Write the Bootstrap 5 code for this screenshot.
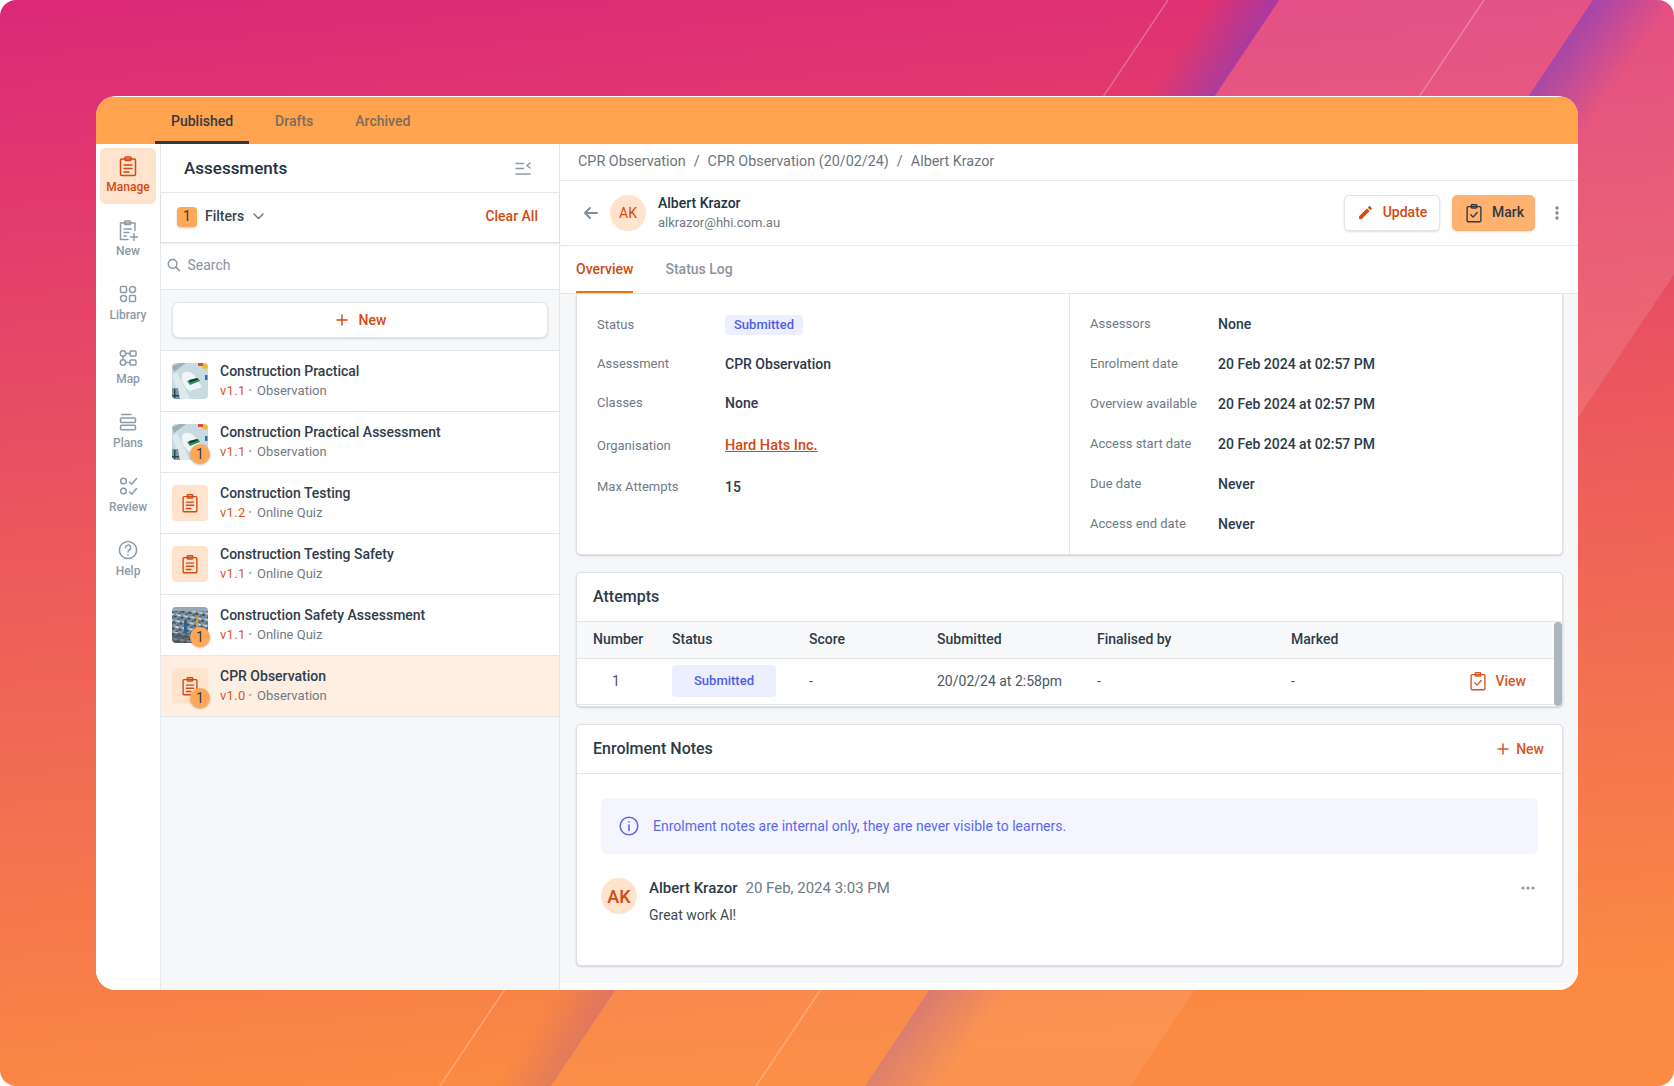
<!doctype html>
<html lang="en">
<head>
<meta charset="utf-8">
<title>Assessments</title>
<link href="https://cdn.jsdelivr.net/npm/bootstrap@5.3.0/dist/css/bootstrap.min.css" rel="stylesheet">
<style>
html,body{margin:0;background:#fff}
body{font-family:Roboto,"Liberation Sans",sans-serif;font-size:14px;color:#2b3a4a;width:1674px;height:1086px;overflow:hidden}
.stage{position:relative;width:1674px;height:1086px;padding:96px;border-radius:16px;overflow:hidden;background:linear-gradient(175deg,#dc2878 0%,#ec5a5c 46%,#fb8b42 92%)}
.stage-art{position:absolute;left:0;top:0;width:1674px;height:1086px}
.shell{position:relative;height:894px;background:#fff;border-radius:20px;overflow:hidden;padding-top:1px;display:flex;flex-direction:column}
.tabbar{height:47px;background:#ffa34f;padding-left:59px;gap:10px;flex-wrap:nowrap;flex:none}
.tabbar .nav-link{height:47px;padding:0 16px;line-height:48px;font-weight:500;color:#7d6c58;border-bottom:3px solid transparent;font-size:14px}
.tabbar .nav-link.active{color:#333a42;border-bottom-color:#33383e}
.body-row{flex:1;min-height:0}
.rail{width:65px;flex:none;border-right:1px solid #e6e9ed;padding:4px 4px 0;background:#fff}
.rail-link{display:flex;flex-direction:column;align-items:center;width:56px;height:56px;margin-bottom:8px;padding-top:6px;border-radius:5px;color:#8d9aa7;font-size:12px;font-weight:500;line-height:14px;text-decoration:none}
.rail-link span{margin-top:2px}
.rail-link.on{background:#ffe3cc;color:#d14a10}
.ico{fill:none;stroke:currentColor;stroke-width:1.5;stroke-linecap:round;stroke-linejoin:round;flex:none}
.listpane{width:399px;flex:none;background:#f6f7f9;border-right:1px solid #e3e6ea}
.pane-head{height:49px;background:#fff;border-bottom:1px solid #e8eaed;padding:2px 28px 0 23px;font-size:17px;font-weight:500;color:#243342}
.pane-filters{height:50px;background:#fff;border-bottom:1px solid #dfe2e6;box-shadow:0 1px 2px rgba(60,70,80,.12);padding:0 21px 2px 16px;position:relative}
.count-chip{width:20px;height:20px;border-radius:4px;background:#ffa85a;color:#33383e;font-size:14px;box-shadow:0 1px 2px rgba(80,60,30,.25);margin-right:8px}
.filters-txt{font-weight:500;color:#38444f;margin-right:9px}
.accent{color:#d14a10;font-weight:500;text-decoration:none}
.pane-search{height:47px;background:#fff;border-bottom:1px solid #e3e6ea;padding:0 0 2px 6px;color:#8a949e}
.pane-search .form-control{border:0;box-shadow:none;padding:0 0 0 7px;font-size:14px;background:transparent}
.pane-search .form-control::placeholder{color:#8a949e}
.new-wrap{padding:12px 11px}
.new-btn{width:100%;height:36px;background:#fff;border:1px solid #e2e5e9;border-radius:7px;box-shadow:0 1px 2px rgba(60,70,80,.18);color:#d14a10;font-weight:500;font-size:14px;padding:0 0 0 2px;gap:11px}
.new-btn:hover{background:#fff;color:#d14a10}
.item-stack{border-radius:0;background:transparent}
.item-stack .list-group-item{height:61px;padding:12px 11px;border:0;border-top:1px solid #e3e6ea;border-radius:0;gap:12px;color:#2b3a4a;margin:0}
.item-stack .list-group-item:last-child{height:62px;border-bottom:1px solid #e3e6ea}
.item-stack .list-group-item.picked{background:#ffefe2}
.thumb-box{position:relative;width:36px;height:36px;flex:none}
.thumb-box>svg.pic{width:36px;height:36px;border-radius:4px;display:block}
.tile{width:36px;height:36px;border-radius:4px;background:#ffe3cc;color:#d14a10}
.dot-badge{position:absolute;left:18px;top:20px;width:20px;height:20px;border-radius:50%;background:#ffa85a;color:#33383e;font-size:14px;line-height:20px;text-align:center;box-shadow:0 1px 2px rgba(80,60,30,.35)}
.item-title{font-size:14px;font-weight:500;line-height:19px;color:#2f3d4b;margin-top:-1px;white-space:nowrap}
.item-sub{font-size:13px;line-height:19px;color:#6f7a85;display:flex;white-space:nowrap}
.item-sub b{font-weight:400;color:#d9561f;letter-spacing:.3px;width:23px}
.item-sub i{font-style:normal;width:14px;text-align:center;color:#aab2ba;font-size:11px;line-height:19px}
.mainpane{flex:1;min-width:0;background:#fff;padding-bottom:7px}
.crumbs{height:37px;border-bottom:1px solid #e8eaed;padding:0 18px;flex:none}
.crumbs .breadcrumb{--bs-breadcrumb-margin-bottom:0;--bs-breadcrumb-divider-color:#6b7680;--bs-breadcrumb-item-active-color:#6b7680;margin:0;font-size:14.35px;color:#6b7680}
.crumbs a{color:#6b7680;text-decoration:none}
.person{height:65px;border-bottom:1px solid #e8eaed;padding:0 19px 0 24px;flex:none}
.back-ico{margin-right:12px}
.round-ini{width:36px;height:36px;border-radius:50%;background:#ffe3cc;color:#d14a10;font-size:14px;flex:none}
.ini-gap{margin-right:12px}
.p-name{font-size:14px;font-weight:500;line-height:20px;color:#243342}
.p-mail{font-size:13px;line-height:20px;color:#6f7a85}
.act{height:36px;font-size:14px;font-weight:500;padding:0 0 1px;gap:9px;border-radius:5px}
.act-up{width:96px;background:#fff;border:1px solid #e2e5e9;color:#d14a10;box-shadow:0 1px 2px rgba(60,70,80,.18)}
.act-up:hover{background:#fff;color:#d14a10}
.act-mk{width:83px;margin-left:12px;background:#ffb26f;border:1px solid #ffb26f;color:#33383e;box-shadow:0 1px 2px rgba(60,70,80,.18);gap:7px}
.act-mk:hover{background:#ffb26f;color:#33383e}
.kebab{margin-left:20px}
.subtabs{height:48px;border-bottom:1px solid #e3e6ea;padding-left:16px;gap:32px;flex:none}
.subtabs .nav-link{padding:0;height:47px;line-height:46px;font-size:14px;font-weight:500;color:#8a949e;border-bottom:2px solid transparent}
.subtabs .nav-link.active{color:#d14a10;border-bottom-color:#f57006}
.scroller{flex:1;min-height:0;overflow:hidden;background:#f6f7f9;padding:0 15px 0 16px}
.panel-box{background:#fff;border:1px solid #dde1e6;border-radius:5px;box-shadow:0 1px 2px rgba(60,70,80,.22);margin-bottom:17px;overflow:hidden}
.over-box{border-top:0;border-radius:0 0 5px 5px;height:261px}
.over-l{width:493px;flex:none;border-right:1px solid #e3e6ea;padding:21px 20px 0}
.over-r{flex:1;padding:20px 20px 0}
.kv{height:20px;display:flex;align-items:center;margin-bottom:19px}
.over-r .kv{margin-bottom:20px}
.kv.tall{margin-bottom:23px}
.kv.mid{margin-bottom:21px}
.kv dt{width:128px;flex:none;font-weight:400;font-size:13px;color:#6f7a85;margin:0}
.kv dd{margin:0;font-weight:500;font-size:14px;color:#2b3a4a}
.kv dd a{color:#d14a10;font-size:14.5px}
.pill-soft{background:#eceffd;color:#4f5ee8;font-size:13px;font-weight:500;border-radius:4px;height:20px;line-height:20px;padding:0 9px;display:inline-block;position:relative;top:-1px}
.box-head{height:49px;border-bottom:1px solid #e3e6ea;padding:0 18px 0 16px;font-size:16px;font-weight:500;color:#2d3b49}
.tbl-wrap{height:84px}
.tbl-wrap .tbl-area{flex:1;min-width:0}
.att-table{table-layout:fixed;width:977px;margin:0;font-size:14px;--bs-table-bg:transparent}
.att-table th{height:36px;padding:0;background:#f8f9fb;font-weight:500;color:#2d3b49;border-bottom:1px solid #e3e6ea;vertical-align:middle}
.att-table td{height:46px;padding:0;color:#4d5864;border-bottom:1px solid #e3e6ea;vertical-align:middle}
.att-table .first-col{padding-left:16px}
.att-table .num-col{padding-left:35px}
.att-table .c1{width:95px}.att-table .c2{width:137px}.att-table .c3{width:128px}.att-table .c4{width:160px}.att-table .c5{width:194px}
.sub-chip{width:104px;height:32px;background:#eceffd;color:#4f5ee8;font-size:13px;font-weight:500;border-radius:4px}
.view-act{color:#d9561f;font-weight:500;text-decoration:none;gap:7px;padding-right:28px}
.fake-thumb{width:8px;flex:none;background:#aeb6bd;border-radius:4px}
.note-body{padding:24px 24px 40px}
.info-note{height:56px;background:#f4f5fe;border-radius:6px;padding:0 16px 0 18px;color:#5b69f0;gap:14px;margin-bottom:24px;font-size:14px}
.note-row{gap:12px;padding-right:3px}
.note-ini{font-size:18px;font-weight:500}
.note-name{font-weight:500;font-size:15px;line-height:20px;color:#2d3b49}
.note-date{font-size:15px;line-height:20px;color:#6f7a85;margin-left:8px}
.note-txt{font-size:14px;line-height:20px;color:#3f4a55;margin-top:7px}
.plus-link{gap:7px;font-size:14px;color:#d9561f}
</style>
</head>
<body>
<svg width="0" height="0" style="position:absolute" aria-hidden="true">
  <symbol id="i-clip" viewBox="0 0 24 24"><rect x="4.5" y="5" width="15" height="16.5" rx="1"/><rect x="9" y="3" width="6" height="3.6" rx=".8"/><path d="M8 11h8M8 14.5h8M8 18h5"/></symbol>
  <symbol id="i-check" viewBox="0 0 24 24"><rect x="4.5" y="5" width="15" height="16.5" rx="1"/><rect x="9" y="3" width="6" height="3.6" rx=".8"/><path d="M8.500 14l2.500 2.500 4.500-5"/></symbol>
  <symbol id="i-new" viewBox="0 0 24 24"><path d="M19 12.500V5H4.500v16.500H12"/><rect x="8.600" y="3" width="6" height="3.600" rx=".8"/><path d="M8 11h7.500M8 14.500h5M8 18h2.500M18 15.500v7M14.500 19h7"/></symbol>
  <symbol id="i-lib" viewBox="0 0 24 24"><rect x="4.500" y="4.500" width="6" height="6" rx="1"/><circle cx="16.500" cy="7.500" r="3"/><circle cx="7.500" cy="16.500" r="3"/><rect x="13.500" y="13.500" width="6" height="6" rx="1"/></symbol>
  <symbol id="i-map" viewBox="0 0 24 24"><circle cx="7" cy="7.500" r="2.700"/><circle cx="7" cy="16.500" r="2.700"/><rect x="14" y="5" width="6" height="5" rx="1"/><rect x="14" y="14" width="6" height="5" rx="1"/><path d="M9.700 7.500H14M9.700 16.500H14M7 10.200v3.600"/></symbol>
  <symbol id="i-plans" viewBox="0 0 24 24"><path d="M6 4.500h9"/><rect x="4.500" y="8" width="15" height="4.600" rx="1.200"/><rect x="4.500" y="15.200" width="15" height="4.600" rx="1.200"/></symbol>
  <symbol id="i-rev" viewBox="0 0 24 24"><circle cx="7.500" cy="7" r="2.800"/><circle cx="7.500" cy="17" r="2.800"/><path d="M13.500 8l2.300 2.200L20.500 4.500M13.500 18l2.300 2.200L20.500 14.500"/></symbol>
  <symbol id="i-help" viewBox="0 0 24 24"><circle cx="12" cy="12" r="8.600"/><path d="M9.500 9.700a2.600 2.600 0 1 1 3.800 2.300c-.9.500-1.300 1-1.300 2"/><path d="M12 16.800v.1"/></symbol>
</svg>
<div class="stage">
  <svg class="stage-art" viewBox="0 0 1674 1086" aria-hidden="true">
    <defs>
      <linearGradient id="sh-l" gradientUnits="userSpaceOnUse" x1="1279" y1="0" x2="1232" y2="-31"><stop offset="0" stop-color="#7b3fc4" stop-opacity=".55"/><stop offset="1" stop-color="#7b3fc4" stop-opacity="0"/></linearGradient>
      <linearGradient id="sh-r" gradientUnits="userSpaceOnUse" x1="1593" y1="0" x2="1648" y2="37"><stop offset="0" stop-color="#7b3fc4" stop-opacity=".6"/><stop offset="1" stop-color="#7b3fc4" stop-opacity="0"/></linearGradient>
      <linearGradient id="ba" x1="0" y1="0" x2="0" y2="1"><stop offset="0" stop-color="#fff" stop-opacity=".15"/><stop offset=".5" stop-color="#fff" stop-opacity=".1"/><stop offset="1" stop-color="#fff" stop-opacity=".03"/></linearGradient>
      <linearGradient id="bb" x1="0" y1="0" x2="0" y2="1"><stop offset="0" stop-color="#fff" stop-opacity=".13"/><stop offset="1" stop-color="#fff" stop-opacity=".08"/></linearGradient>
      <linearGradient id="fadeY" x1="0" y1="0" x2="0" y2="1"><stop offset="0" stop-color="#fff"/><stop offset="1" stop-color="#fff" stop-opacity=".4"/></linearGradient>
      <mask id="shadow-fade" maskUnits="userSpaceOnUse" x="0" y="0" width="1674" height="1086"><rect width="1674" height="1086" fill="url(#fadeY)"/></mask>
    </defs>
    <polygon points="1279,0 1593,0 865,1086 551,1086" fill="url(#ba)"/>
    <polygon points="1593,0 1858,0 1130,1086 865,1086" fill="url(#bb)"/>
    <g mask="url(#shadow-fade)">
      <polygon points="1179,0 1279,0 551,1086 451,1086" fill="url(#sh-l)"/>
      <polygon points="1593,0 1693,0 965,1086 865,1086" fill="url(#sh-r)"/>
    </g>
    <path d="M1168 0L440 1086M1484 0L756 1086" stroke="#fff" stroke-opacity=".25" stroke-width="1.500" fill="none"/>
  </svg>
  <div class="shell">
    <ul class="nav tabbar">
      <li class="nav-item"><a class="nav-link active" href="#">Published</a></li>
      <li class="nav-item"><a class="nav-link" href="#">Drafts</a></li>
      <li class="nav-item"><a class="nav-link" href="#">Archived</a></li>
    </ul>
    <div class="d-flex body-row">
      <nav class="rail">
        <a class="rail-link on" href="#"><svg class="ico" width="24" height="24"><use href="#i-clip"/></svg><span>Manage</span></a>
        <a class="rail-link" href="#"><svg class="ico" width="24" height="24"><use href="#i-new"/></svg><span>New</span></a>
        <a class="rail-link" href="#"><svg class="ico" width="24" height="24"><use href="#i-lib"/></svg><span>Library</span></a>
        <a class="rail-link" href="#"><svg class="ico" width="24" height="24"><use href="#i-map"/></svg><span>Map</span></a>
        <a class="rail-link" href="#"><svg class="ico" width="24" height="24"><use href="#i-plans"/></svg><span>Plans</span></a>
        <a class="rail-link" href="#"><svg class="ico" width="24" height="24"><use href="#i-rev"/></svg><span>Review</span></a>
        <a class="rail-link" href="#"><svg class="ico" width="24" height="24"><use href="#i-help"/></svg><span>Help</span></a>
      </nav>
      <section class="listpane">
        <div class="pane-head d-flex align-items-center justify-content-between">
          <span>Assessments</span>
          <svg width="16" height="14" viewBox="0 0 16 14" fill="none" stroke="#8d9aa7" stroke-width="1.500" stroke-linecap="round" stroke-linejoin="round"><path d="M1 1.500h7.500M1 6.500h7.500M1 12h14M15 1l-3 2.500 3 2.500"/></svg>
        </div>
        <div class="pane-filters d-flex align-items-center">
          <span class="count-chip d-flex align-items-center justify-content-center">1</span>
          <span class="filters-txt">Filters</span>
          <svg width="11" height="7" viewBox="0 0 11 7" fill="none" stroke="#6f7a85" stroke-width="1.500" stroke-linecap="round" stroke-linejoin="round"><path d="M1 1l4.500 4.500L10 1"/></svg>
          <a class="accent ms-auto" href="#">Clear All</a>
        </div>
        <div class="pane-search d-flex align-items-center">
          <svg width="14" height="14" viewBox="0 0 14 14" fill="none" stroke="#8a949e" stroke-width="1.500" stroke-linecap="round"><circle cx="5.800" cy="5.800" r="4.500"/><path d="M9.200 9.200L13 13"/></svg>
          <input class="form-control" type="text" placeholder="Search" aria-label="Search">
        </div>
        <div class="new-wrap">
          <button class="btn new-btn d-flex align-items-center justify-content-center" type="button"><svg width="12" height="12" viewBox="0 0 12 12" fill="none" stroke="currentColor" stroke-width="1.500" stroke-linecap="round"><path d="M6 1v10M1 6h10"/></svg>New</button>
        </div>
        <div class="list-group item-stack">
          <a href="#" class="list-group-item d-flex">
            <div class="thumb-box"><svg class="pic" viewBox="0 0 36 36"><use href="#pic-a"/></svg></div>
            <div><div class="item-title">Construction Practical</div><div class="item-sub"><b>v1.1</b><i>•</i>Observation</div></div>
          </a>
          <a href="#" class="list-group-item d-flex">
            <div class="thumb-box"><svg class="pic" viewBox="0 0 36 36"><use href="#pic-a"/></svg><span class="dot-badge">1</span></div>
            <div><div class="item-title">Construction Practical Assessment</div><div class="item-sub"><b>v1.1</b><i>•</i>Observation</div></div>
          </a>
          <a href="#" class="list-group-item d-flex">
            <div class="thumb-box"><div class="tile d-flex align-items-center justify-content-center"><svg class="ico" width="22" height="22"><use href="#i-clip"/></svg></div></div>
            <div><div class="item-title">Construction Testing</div><div class="item-sub"><b>v1.2</b><i>•</i>Online Quiz</div></div>
          </a>
          <a href="#" class="list-group-item d-flex">
            <div class="thumb-box"><div class="tile d-flex align-items-center justify-content-center"><svg class="ico" width="22" height="22"><use href="#i-clip"/></svg></div></div>
            <div><div class="item-title">Construction Testing Safety</div><div class="item-sub"><b>v1.1</b><i>•</i>Online Quiz</div></div>
          </a>
          <a href="#" class="list-group-item d-flex">
            <div class="thumb-box"><svg class="pic" viewBox="0 0 36 36"><use href="#pic-b"/></svg><span class="dot-badge">1</span></div>
            <div><div class="item-title">Construction Safety Assessment</div><div class="item-sub"><b>v1.1</b><i>•</i>Online Quiz</div></div>
          </a>
          <a href="#" class="list-group-item picked d-flex">
            <div class="thumb-box"><div class="tile d-flex align-items-center justify-content-center"><svg class="ico" width="22" height="22"><use href="#i-clip"/></svg></div><span class="dot-badge">1</span></div>
            <div><div class="item-title">CPR Observation</div><div class="item-sub"><b>v1.0</b><i>•</i>Observation</div></div>
          </a>
        </div>
      </section>
      <main class="mainpane d-flex flex-column">
        <div class="crumbs d-flex align-items-center">
          <ol class="breadcrumb">
            <li class="breadcrumb-item"><a href="#">CPR Observation</a></li>
            <li class="breadcrumb-item"><a href="#">CPR Observation (20/02/24)</a></li>
            <li class="breadcrumb-item active">Albert Krazor</li>
          </ol>
        </div>
        <div class="person d-flex align-items-center">
          <svg class="back-ico" width="14" height="12" viewBox="0 0 14 12" fill="none" stroke="#7f8b97" stroke-width="1.800" stroke-linecap="round" stroke-linejoin="round"><path d="M13 6H1.500M6 1L1 6l5 5"/></svg>
          <div class="round-ini ini-gap d-flex align-items-center justify-content-center">AK</div>
          <div><div class="p-name">Albert Krazor</div><div class="p-mail">alkrazor@hhi.com.au</div></div>
          <button class="btn act act-up d-flex align-items-center justify-content-center ms-auto" type="button"><svg width="17" height="17" viewBox="0 0 24 24" fill="currentColor"><path d="M3 17.250V21h3.750L17.810 9.940l-3.750-3.750L3 17.250zM20.710 7.040c.39-.39.39-1.020 0-1.410l-2.340-2.340c-.39-.39-1.020-.39-1.410 0l-1.830 1.830 3.750 3.750 1.830-1.830z"/></svg>Update</button>
          <button class="btn act act-mk d-flex align-items-center justify-content-center" type="button"><svg class="ico" width="22" height="22"><use href="#i-check"/></svg>Mark</button>
          <svg class="kebab" width="4" height="14" viewBox="0 0 4 14" fill="#7f8b97"><circle cx="2" cy="2" r="1.700"/><circle cx="2" cy="7" r="1.700"/><circle cx="2" cy="12" r="1.700"/></svg>
        </div>
        <ul class="nav subtabs">
          <li class="nav-item"><a class="nav-link active" href="#">Overview</a></li>
          <li class="nav-item"><a class="nav-link" href="#">Status Log</a></li>
        </ul>
        <div class="scroller">
          <div class="panel-box over-box d-flex">
            <dl class="over-l m-0">
              <div class="kv"><dt>Status</dt><dd><span class="pill-soft">Submitted</span></dd></div>
              <div class="kv"><dt>Assessment</dt><dd>CPR Observation</dd></div>
              <div class="kv tall"><dt>Classes</dt><dd>None</dd></div>
              <div class="kv mid"><dt>Organisation</dt><dd><a href="#">Hard Hats Inc.</a></dd></div>
              <div class="kv"><dt>Max Attempts</dt><dd>15</dd></div>
            </dl>
            <dl class="over-r m-0">
              <div class="kv"><dt>Assessors</dt><dd>None</dd></div>
              <div class="kv"><dt>Enrolment date</dt><dd>20 Feb 2024 at 02:57 PM</dd></div>
              <div class="kv"><dt>Overview available</dt><dd>20 Feb 2024 at 02:57 PM</dd></div>
              <div class="kv"><dt>Access start date</dt><dd>20 Feb 2024 at 02:57 PM</dd></div>
              <div class="kv"><dt>Due date</dt><dd>Never</dd></div>
              <div class="kv"><dt>Access end date</dt><dd>Never</dd></div>
            </dl>
          </div>
          <div class="panel-box">
            <div class="box-head d-flex align-items-center">Attempts</div>
            <div class="d-flex tbl-wrap">
              <div class="tbl-area">
                <table class="table att-table">
                  <colgroup><col class="c1"><col class="c2"><col class="c3"><col class="c4"><col class="c5"><col></colgroup>
                  <thead><tr><th class="first-col">Number</th><th>Status</th><th>Score</th><th>Submitted</th><th>Finalised by</th><th>Marked</th></tr></thead>
                  <tbody><tr>
                    <td class="num-col">1</td>
                    <td><div class="sub-chip d-flex align-items-center justify-content-center">Submitted</div></td>
                    <td>-</td>
                    <td>20/02/24 at 2:58pm</td>
                    <td>-</td>
                    <td><div class="d-flex align-items-center justify-content-between"><span>-</span><a class="view-act d-flex align-items-center" href="#"><svg class="ico" width="22" height="22"><use href="#i-check"/></svg>View</a></div></td>
                  </tr></tbody>
                </table>
              </div>
              <div class="fake-thumb"></div>
            </div>
          </div>
          <div class="panel-box mb-0">
            <div class="box-head d-flex align-items-center justify-content-between">
              <span>Enrolment Notes</span>
              <a class="accent plus-link d-flex align-items-center" href="#"><svg width="12" height="12" viewBox="0 0 12 12" fill="none" stroke="currentColor" stroke-width="1.500" stroke-linecap="round"><path d="M6 1v10M1 6h10"/></svg>New</a>
            </div>
            <div class="note-body">
              <div class="info-note d-flex align-items-center">
                <svg width="20" height="20" viewBox="0 0 20 20" fill="none" stroke="currentColor" stroke-width="1.600" stroke-linecap="round"><circle cx="10" cy="10" r="8.800"/><path d="M10 9v5.500M10 5.800v.2"/></svg>
                <span>Enrolment notes are internal only, they are never visible to learners.</span>
              </div>
              <div class="note-row d-flex">
                <div class="round-ini note-ini d-flex align-items-center justify-content-center">AK</div>
                <div>
                  <div class="d-flex"><span class="note-name">Albert Krazor</span><span class="note-date">20 Feb, 2024 3:03 PM</span></div>
                  <div class="note-txt">Great work Al!</div>
                </div>
                <svg class="ms-auto mt-2" width="14" height="4" viewBox="0 0 14 4" fill="#8d9aa7"><circle cx="2" cy="2" r="1.600"/><circle cx="7" cy="2" r="1.600"/><circle cx="12" cy="2" r="1.600"/></svg>
              </div>
            </div>
          </div>
        </div>
      </main>
    </div>
  </div>
</div>
<svg width="0" height="0" style="position:absolute" aria-hidden="true">
  <defs>
    <filter id="soft" x="-5%" y="-5%" width="110%" height="110%"><feGaussianBlur stdDeviation=".45"/></filter>
    <filter id="soft2" x="-5%" y="-5%" width="110%" height="110%"><feGaussianBlur stdDeviation=".6"/></filter>
    <pattern id="pb" width="7" height="6" patternUnits="userSpaceOnUse" patternTransform="rotate(9)"><rect width="7" height="6" fill="#7f8f9b"/><rect width="3" height="2" fill="#c9d2d8"/><rect x="3" y="2" width="3" height="2" fill="#3f5161"/><rect x="1" y="3" width="1.500" height="2" fill="#3d6f94"/><rect x="5" y="0" width="2" height="1.500" fill="#aab7bf"/><rect x="0" y="5" width="3" height="1" fill="#4f5b65"/></pattern>
  </defs>
  <symbol id="pic-a" viewBox="0 0 36 36">
    <g filter="url(#soft)">
      <rect width="36" height="36" fill="#c7dbe1"/>
      <path d="M0 3L8 0h6L2 9z" fill="#a0aeb3"/>
      <path d="M0 12L5 9 18 36H8z" fill="#dfeaed"/>
      <path d="M10 12C12 7 19 8 23 13L30 24 18 28C12 24 9 18 10 12z" fill="#f0f6f7"/>
      <path d="M15 18l11-3 2 3-10 4z" fill="#2f8f63"/>
      <path d="M17 17l8-2 1 1.500-8 3z" fill="#1c3a3a"/>
      <path d="M0 25h6l2 11H0z" fill="#7f99a4"/>
      <path d="M2 26h1.500v9H2zM0 32h7v1.500H0z" fill="#2c4658"/>
      <circle cx="33" cy="3" r="3" fill="#e8bb35"/><rect x="26" y="0" width="5" height="3" fill="#d6503f"/>
      <rect x="33" y="12" width="2.500" height="5" fill="#3a6ea5"/>
    </g>
  </symbol>
  <symbol id="pic-b" viewBox="0 0 36 36">
    <g filter="url(#soft2)">
      <rect width="36" height="36" fill="url(#pb)"/>
      <rect width="36" height="4" fill="#9aa8b3"/>
      <rect x="0" y="26" width="36" height="10" fill="#3f4a53" fill-opacity=".55"/>
      <rect x="12" y="14" width="3" height="12" fill="#28648f"/><rect x="24" y="9" width="2" height="14" fill="#c99c3c"/>
    </g>
  </symbol>
</svg>
<script src="https://cdn.jsdelivr.net/npm/bootstrap@5.3.0/dist/js/bootstrap.bundle.min.js"></script>
</body>
</html>
